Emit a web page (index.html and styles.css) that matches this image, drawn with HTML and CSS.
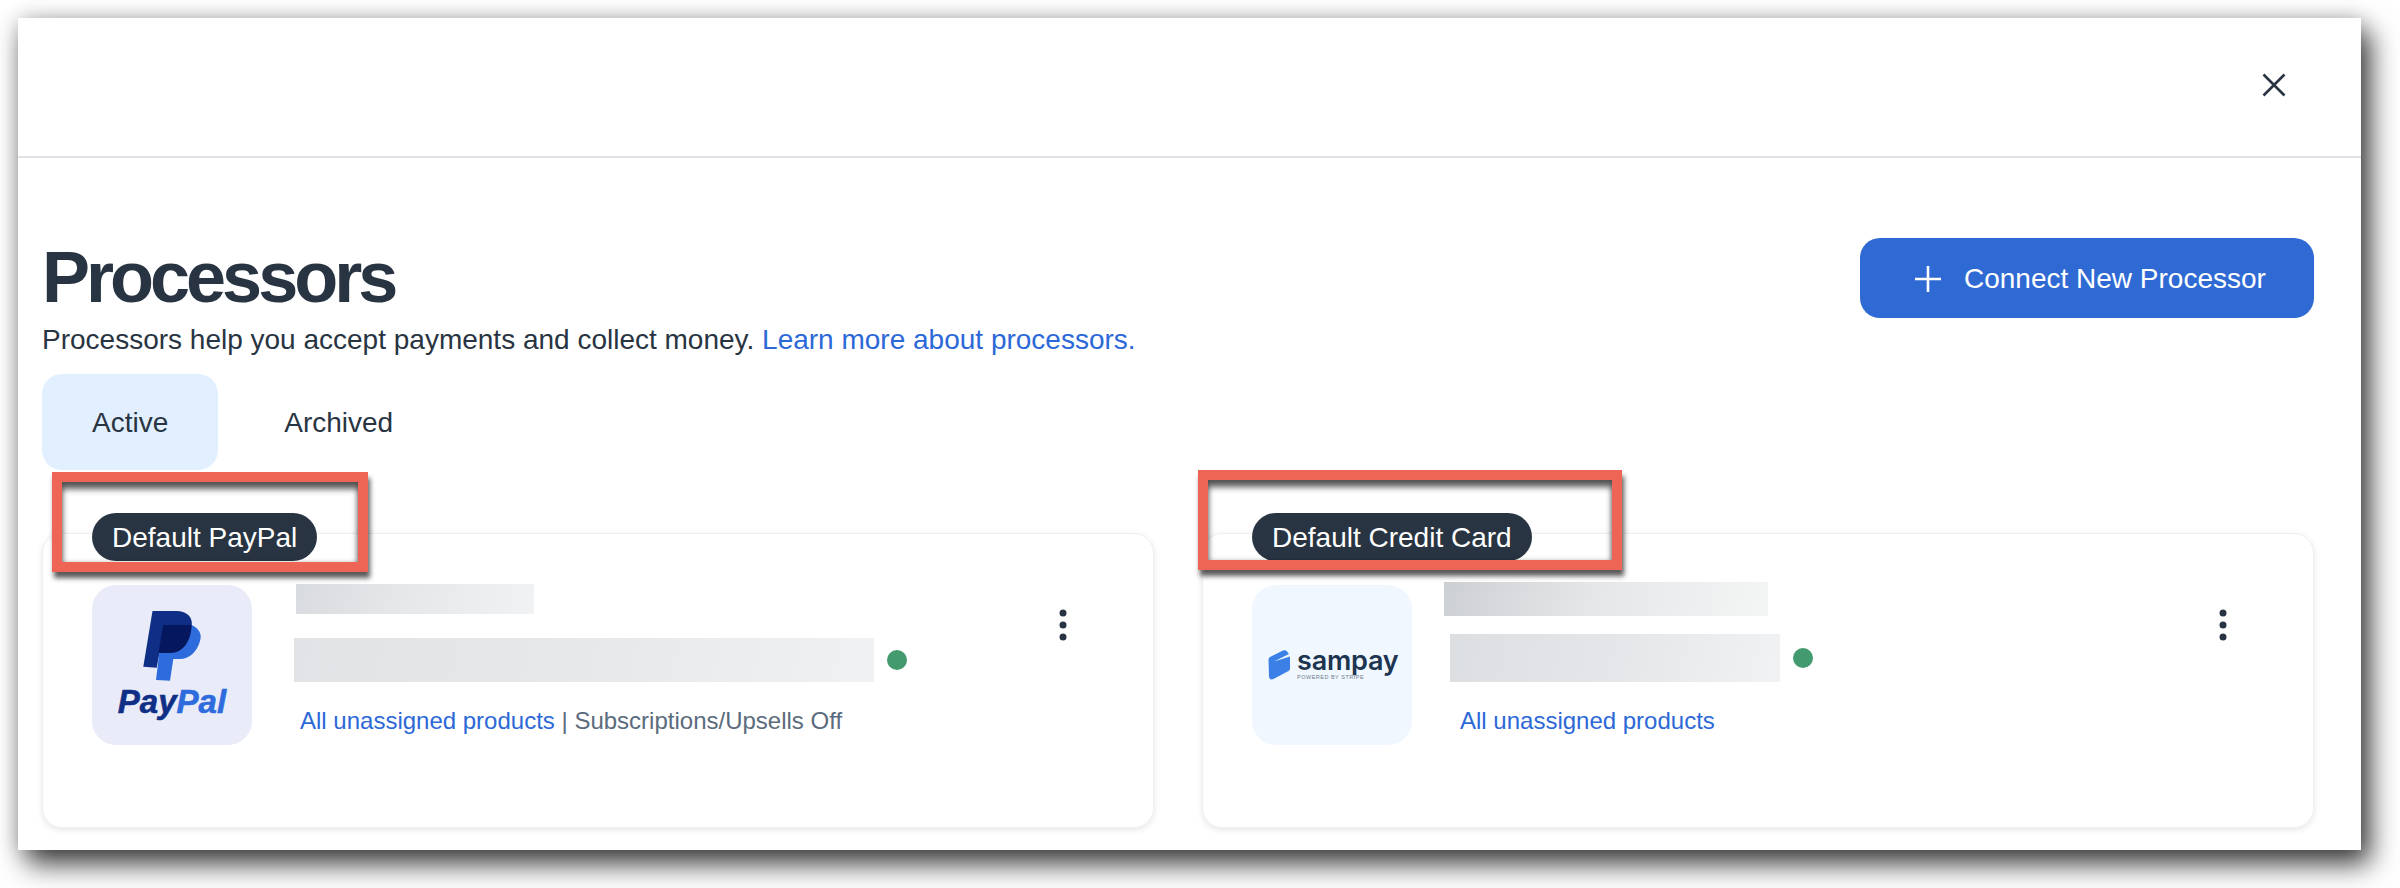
FILE: index.html
```html
<!DOCTYPE html>
<html lang="en">
<head>
    <meta charset="UTF-8">
    <title>Processors</title>
    <link rel="stylesheet" href="styles.css">
</head>
<body>

    <div class="panel">
        <!-- Top bar with close icon -->
        <div class="panel-header">
            <svg class="close-icon" viewBox="0 0 24 24" width="24" height="24">
                <path d="M1.5 1.5 22.5 22.5M22.5 1.5 1.5 22.5" fill="none" stroke="#283442" stroke-width="2.6"/>
            </svg>
        </div>

        <div class="panel-body">
            <div class="title-row">
                <h1 class="page-title">Processors</h1>
                <button class="connect-btn">
                    <svg viewBox="0 0 28 28" width="28" height="28">
                        <path d="M14 1V27M1 14H27" fill="none" stroke="#fff" stroke-width="2.6"/>
                    </svg>
                    Connect New Processor
                </button>
            </div>
            <p class="subtitle">Processors help you accept payments and collect money. <a class="link" href="#">Learn more about processors.</a></p>

            <div class="tabs">
                <div class="tab tab-active">Active</div>
                <div class="tab">Archived</div>
            </div>

            <div class="card-grid">
                <!-- PayPal card -->
                <div class="card">
                    <span class="badge">Default PayPal</span>
                    <div class="callout callout-paypal"></div>
                    <div class="logo-tile logo-paypal">
                        <svg class="paypal-mark" viewBox="0 0 60 72" width="60" height="72">
                            <path d="M10.5 0H34C46 0 51 7 49.7 15C48 30 40 42 28 42H17.5L14.7 56.7 1.3 55.7Z" fill="#0f2f86"/>
                            <path d="M20.7 14H49.7C58 18 60 24 58 30C55 41 47 48 38 48H31.3L28 69.7 14 69Z" fill="#2e6bdd"/>
                            <path d="M20.7 14H49.7C49 29 42 42 28 42H16.6Z" fill="#04175f"/>
                        </svg>
                        <div class="paypal-word"><span class="pay">Pay</span><span class="pal">Pal</span></div>
                    </div>
                    <div class="card-info">
                        <div class="bar-name-paypal"></div>
                        <div class="account-row row-paypal">
                            <div class="bar-account-paypal"></div>
                            <span class="status-dot"></span>
                        </div>
                        <div class="card-meta meta-paypal"><a class="link" href="#">All unassigned products</a> <span class="meta-sep">|</span> Subscriptions/Upsells Off</div>
                    </div>
                    <svg class="kebab" viewBox="0 0 8 32" width="8" height="32">
                        <circle cx="4" cy="4" r="3.5"/>
                        <circle cx="4" cy="16" r="3.5"/>
                        <circle cx="4" cy="28" r="3.5"/>
                    </svg>
                </div>

                <!-- Sampay card -->
                <div class="card">
                    <span class="badge">Default Credit Card</span>
                    <div class="callout callout-sampay"></div>
                    <div class="logo-tile logo-sampay">
                        <svg class="wallet" viewBox="0 0 23 30" width="23" height="30">
                            <path d="M0.5 9.5Q0.5 8 2 7L15 0.6Q17.5-0.4 19 1.5L21 4 6 11.5 22 6.5V18.5Q22 20 20.5 21L5.5 29Q1.5 30.5 1 26.5Z" fill="#3a80e6"/>
                        </svg>
                        <div class="sampay-text">
                            <div class="sampay-word">sampay</div>
                            <div class="sampay-sub">POWERED BY STRIPE</div>
                        </div>
                    </div>
                    <div class="card-info info-sampay">
                        <div class="bar-name-sampay"></div>
                        <div class="account-row row-sampay">
                            <div class="bar-account-sampay"></div>
                            <span class="status-dot"></span>
                        </div>
                        <div class="card-meta meta-sampay"><a class="link" href="#">All unassigned products</a></div>
                    </div>
                    <svg class="kebab" viewBox="0 0 8 32" width="8" height="32">
                        <circle cx="4" cy="4" r="3.5"/>
                        <circle cx="4" cy="16" r="3.5"/>
                        <circle cx="4" cy="28" r="3.5"/>
                    </svg>
                </div>
            </div>
        </div>
    </div>

</body>
</html>
```

FILE: styles.css
```css
/* Page and outer window */
body {
    margin: 0;
    height: 888px;
    padding: 18px 39px 38px 18px;
    box-sizing: border-box;
    overflow: hidden;
    background-color: #fff;
    font-family: "Liberation Sans", Arial, sans-serif;
    color: #283442;
}

.panel {
    height: 832px;
    background-color: #fff;
    box-shadow: 9px 14px 26px rgba(0, 0, 0, 0.75), 0 0 20px rgba(0, 0, 0, 0.2);
}

.panel-header {
    height: 83px;
    border-bottom: 2px solid #dfe3e8;
    display: flex;
    justify-content: flex-end;
    align-items: flex-start;
    padding: 55px 75px 0 0;
}

.panel-body {
    padding: 80px 47px 0 24px;
}

/* Title and main action */
.title-row {
    display: flex;
    justify-content: space-between;
    align-items: flex-start;
}

.page-title {
    margin: 0;
    font-size: 72px;
    line-height: 78px;
    font-weight: bold;
    letter-spacing: -4px;
}

.connect-btn {
    width: 454px;
    height: 80px;
    display: flex;
    align-items: center;
    gap: 22px;
    padding: 2px 0 0 54px;
    background-color: #2f6ad4;
    color: #fff;
    border: none;
    border-radius: 20px;
    font-family: inherit;
    font-size: 28px;
}

.subtitle {
    margin: 0;
    padding-top: 2px;
    font-size: 28px;
    line-height: 40px;
}

.link {
    color: #2c68d8;
    text-decoration: none;
}

/* Tabs */
.tabs {
    display: flex;
    gap: 16px;
    margin-top: 14px;
}

.tab {
    height: 96px;
    line-height: 98px;
    padding: 0 50px;
    font-size: 28px;
    border-radius: 20px;
}

.tab-active {
    background-color: #e1effe;
}

/* Processor cards */
.card-grid {
    display: grid;
    grid-template-columns: 1112px 1112px;
    gap: 48px;
    margin-top: 63px;
}

.card {
    position: relative;
    height: 295px;
    box-sizing: border-box;
    display: flex;
    align-items: flex-start;
    padding: 51px 86px 0 49px;
    border: 1px solid #eeeff1;
    border-radius: 20px;
    box-shadow: 0 2px 6px rgba(0, 0, 0, 0.1);
}

.badge {
    position: absolute;
    left: 49px;
    top: -21px;
    height: 48px;
    line-height: 50px;
    padding: 0 20px;
    background-color: #283442;
    color: #fff;
    font-size: 28px;
    border-radius: 24px;
    white-space: nowrap;
}

/* Red annotation boxes */
.callout {
    position: absolute;
    height: 100px;
    box-sizing: border-box;
    border: 10px solid #ef6555;
    box-shadow: 2px 6px 5px rgba(0, 0, 0, 0.65), inset 0 7px 6px rgba(0, 0, 0, 0.65), inset 0 0 4px rgba(0, 0, 0, 0.25);
}

.callout-paypal {
    left: 9px;
    top: -62px;
    width: 316px;
}

.callout-sampay {
    left: -5px;
    top: -64px;
    width: 424px;
}

/* Logo tiles */
.logo-tile {
    width: 160px;
    height: 160px;
    flex-shrink: 0;
    border-radius: 24px;
    box-sizing: border-box;
}

.logo-paypal {
    background-color: #e9ecf8;
    display: flex;
    flex-direction: column;
    align-items: center;
    padding-top: 26px;
}

.paypal-mark {
    margin-left: -1px;
}

.paypal-word {
    font-size: 33px;
    line-height: 38px;
    font-weight: bold;
    font-style: italic;
    -webkit-text-stroke: 0.6px;
}

.pay {
    color: #0f2f86;
}

.pal {
    color: #2e6bdd;
}

.logo-sampay {
    background-color: #f0f7ff;
    display: flex;
    align-items: flex-start;
    gap: 6px;
    padding: 65px 0 0 16px;
}

.sampay-word {
    margin-top: -2px;
    font-family: Inter, sans-serif;
    font-size: 27px;
    line-height: 26px;
    font-weight: 600;
    letter-spacing: -0.2px;
    color: #1d3550;
}

.sampay-sub {
    font-size: 5.5px;
    line-height: 7px;
    letter-spacing: 0.5px;
    color: #6d7b8c;
}

/* Card details */
.card-info {
    margin-left: 42px;
    flex-grow: 1;
}

.info-sampay {
    margin-left: 32px;
}

.bar-name-paypal {
    width: 238px;
    height: 30px;
    margin: -1px 0 0 2px;
    background: linear-gradient(105deg, #d8dbdf 0%, #e4e6e8 40%, #f1f2f3 100%);
}

.bar-account-paypal {
    width: 580px;
    height: 44px;
    background: linear-gradient(100deg, #e1e3e6 0%, #e6e8ea 50%, #f0f1f2 100%);
}

.bar-name-sampay {
    width: 324px;
    height: 34px;
    margin-top: -3px;
    background: linear-gradient(105deg, #cdd0d3 0%, #e4e6e8 45%, #f4f5f5 100%);
}

.bar-account-sampay {
    width: 330px;
    height: 48px;
    background: linear-gradient(105deg, #dcdfe2 0%, #e4e6e9 50%, #f1f2f3 100%);
}

.account-row {
    display: flex;
    align-items: center;
    gap: 13px;
}

.row-paypal {
    margin-top: 24px;
}

.row-sampay {
    margin: 18px 0 0 6px;
}

.status-dot {
    width: 20px;
    height: 20px;
    border-radius: 50%;
    background-color: #429a6e;
}

.card-meta {
    margin-top: 23px;
    font-size: 24px;
    line-height: 32px;
    color: #5b6b7d;
    white-space: nowrap;
}

.meta-paypal {
    margin-left: 6px;
}

.meta-sampay {
    margin-left: 16px;
}

.kebab {
    flex-shrink: 0;
    margin-top: 24px;
    fill: #283442;
}
```
